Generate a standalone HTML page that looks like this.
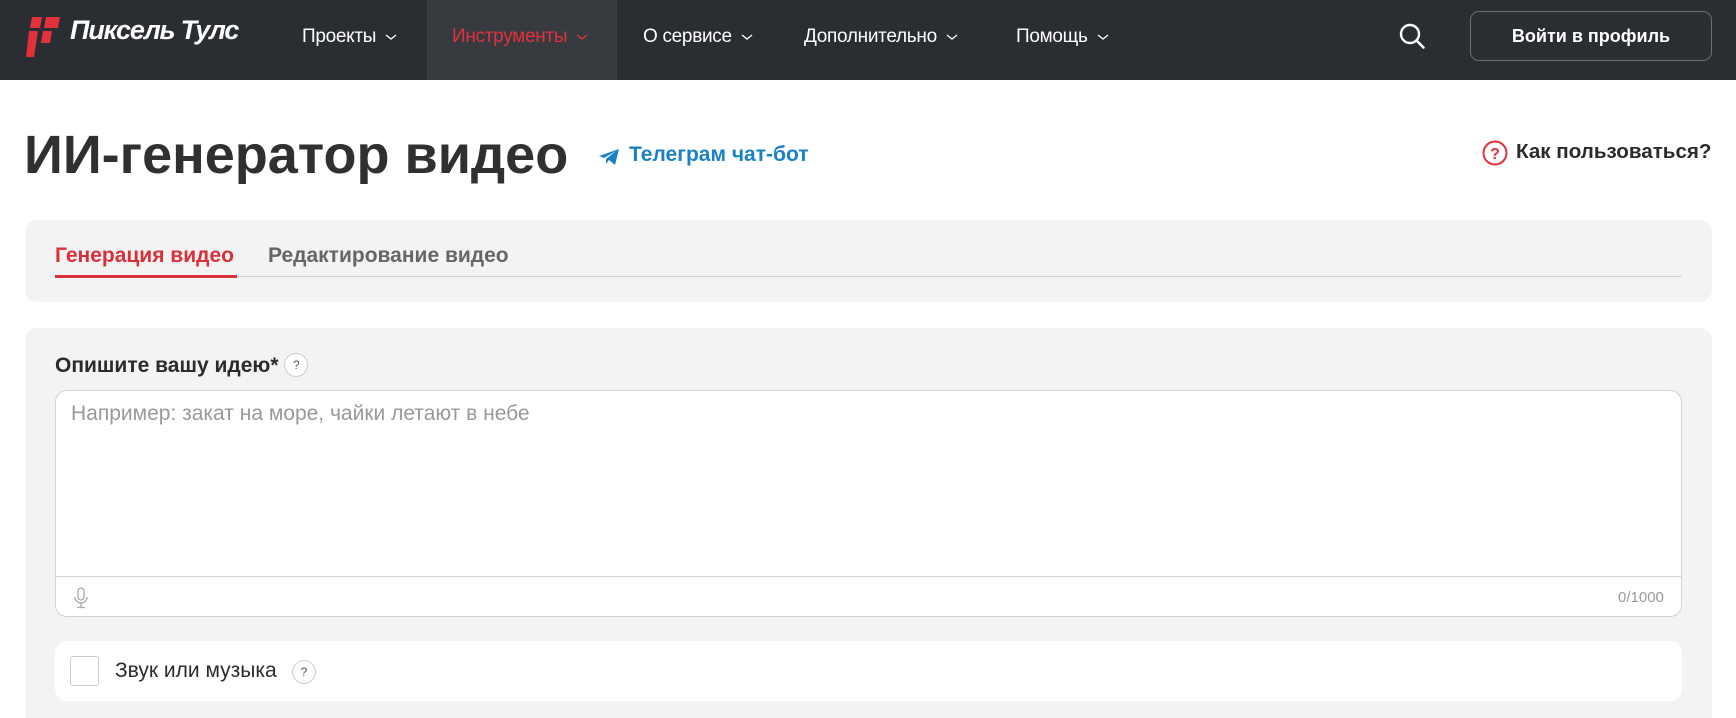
<!DOCTYPE html>
<html style="height:718px;overflow:hidden"><head><meta charset="utf-8"><style>
*{margin:0;padding:0;box-sizing:border-box}
body{width:1736px;height:718px;overflow:hidden;background:#fff;font-family:"Liberation Sans",sans-serif;color:#2b2b2b;position:relative}
.hdr{position:absolute;left:0;top:0;width:1736px;height:80px;background:#2a2d32}
.a{position:absolute}
.nav{position:absolute;top:26px;font-size:19px;color:#fff;white-space:nowrap;letter-spacing:-0.3px}
.nav svg{margin-left:9px;vertical-align:middle}
.btn{position:absolute;left:1470px;top:11px;width:242px;height:50px;border:1px solid #6a6d72;border-radius:9px;color:#fff;font-weight:bold;font-size:18px;text-align:center;line-height:48px}
.panel{position:absolute;left:25px;width:1687px;background:#f3f3f3;border-radius:12px}
.q{display:inline-block;width:24px;height:24px;border:1px solid #ccc;border-radius:50%;background:#fff;font-size:12px;font-weight:normal;text-align:center;line-height:22px;color:#555;vertical-align:middle}
</style></head><body>
<div class="hdr"></div>
<svg class="a" style="left:26px;top:16px" width="36" height="42" viewBox="0 0 36 42">
<g fill="#e3313b"><path d="M6 1h10l-2 11H4z"/><path d="M20 1h14l-2 11H18z"/><path d="M3 15h9L8 41H0z"/><path d="M17 15h9l-2 12h-9z"/></g></svg>
<div class="a" style="left:70px;top:15px;color:#fff;font-size:27px;font-weight:bold;font-style:italic;letter-spacing:-1.2px">Пиксель Тулс</div>
<div class="a" style="left:427px;top:0;width:190px;height:80px;background:#373a3f"></div>
<div class="nav" style="left:302px">Проекты<svg width="12" height="6"><path d="M1 1l5 4 5-4" stroke="#fff" fill="none" stroke-width="1.3"/></svg></div>
<div class="nav" style="left:452px;color:#e3313b">Инструменты<svg width="12" height="6"><path d="M1 1l5 4 5-4" stroke="#e3313b" fill="none" stroke-width="1.3"/></svg></div>
<div class="nav" style="left:643px">О сервисе<svg width="12" height="6"><path d="M1 1l5 4 5-4" stroke="#fff" fill="none" stroke-width="1.3"/></svg></div>
<div class="nav" style="left:804px">Дополнительно<svg width="12" height="6"><path d="M1 1l5 4 5-4" stroke="#fff" fill="none" stroke-width="1.3"/></svg></div>
<div class="nav" style="left:1016px">Помощь<svg width="12" height="6"><path d="M1 1l5 4 5-4" stroke="#fff" fill="none" stroke-width="1.3"/></svg></div>
<svg class="a" style="left:1399px;top:23px" width="28" height="28" viewBox="0 0 28 28"><circle cx="11" cy="11" r="9" stroke="#fff" stroke-width="2.4" fill="none"/><path d="M17.5 17.5l7 7" stroke="#fff" stroke-width="2.6" stroke-linecap="round"/></svg>
<div class="btn">Войти в профиль</div>

<div class="a" style="left:24px;top:124px;font-size:54px;font-weight:bold;color:#303030">ИИ-генератор видео</div>
<svg class="a" style="left:598px;top:148px" width="22" height="18" viewBox="0 0 22 18"><path d="M1 8L21 1l-4 16-6-5-3 4V11l10-8-12 7z" fill="#1a82c4"/></svg>
<div class="a" style="left:629px;top:143px;font-size:21px;font-weight:bold;color:#1a82c4">Телеграм чат-бот</div>
<svg class="a" style="left:1482px;top:140px" width="26" height="26" viewBox="0 0 26 26"><circle cx="13" cy="13" r="11.5" stroke="#e3313b" stroke-width="2" fill="none"/><text x="13" y="19" text-anchor="middle" font-family="Liberation Sans" font-weight="bold" font-size="16" fill="#e3313b">?</text></svg>
<div class="a" style="left:1516px;top:140px;font-size:20.6px;font-weight:bold;color:#2b2b2b">Как пользоваться?</div>

<div class="panel" style="top:220px;height:82px"></div>
<div class="a" style="left:55px;top:276px;width:1627px;height:1px;background:#d6d6d6"></div>
<div class="a" style="left:55px;top:244px;font-size:21px;font-weight:bold;color:#d9303a">Генерация видео</div>
<div class="a" style="left:55px;top:275px;width:182px;height:3px;background:#d9303a"></div>
<div class="a" style="left:268px;top:244px;font-size:21px;font-weight:bold;color:#666">Редактирование видео</div>

<div class="panel" style="top:328px;height:390px;border-bottom-left-radius:0;border-bottom-right-radius:0"></div>
<div class="a" style="left:55px;top:354px;font-size:21px;font-weight:bold;color:#2b2b2b">Опишите вашу идею* <span class="q" style="margin-left:0;margin-top:-3px">?</span></div>
<div class="a" style="left:55px;top:390px;width:1627px;height:227px;background:#fff;border:1px solid #d2d2d2;border-radius:12px"></div>
<div class="a" style="left:56px;top:576px;width:1625px;height:1px;background:#d6d6d6"></div>
<div class="a" style="left:71px;top:402px;font-size:21px;color:#999">Например: закат на море, чайки летают в небе</div>
<svg class="a" style="left:73px;top:587px" width="16" height="22" viewBox="0 0 16 22"><rect x="5" y="1" width="6" height="12" rx="3" stroke="#aaa" fill="none" stroke-width="1.3"/><path d="M2 10a6 6 0 0012 0M8 16v4M4 20.5h8" stroke="#aaa" fill="none" stroke-width="1.3"/></svg>
<div class="a" style="left:1618px;top:589px;font-size:15px;color:#999">0/1000</div>

<div class="a" style="left:55px;top:641px;width:1627px;height:60px;background:#fff;border-radius:12px"></div>
<div class="a" style="left:70px;top:656px;width:29px;height:30px;border:1px solid #ccc;border-radius:3px;background:#fff"></div>
<div class="a" style="left:115px;top:659px;font-size:21px;color:#2b2b2b">Звук или музыка</div>
<div class="a" style="left:292px;top:660px"><span class="q">?</span></div>
</body></html>
